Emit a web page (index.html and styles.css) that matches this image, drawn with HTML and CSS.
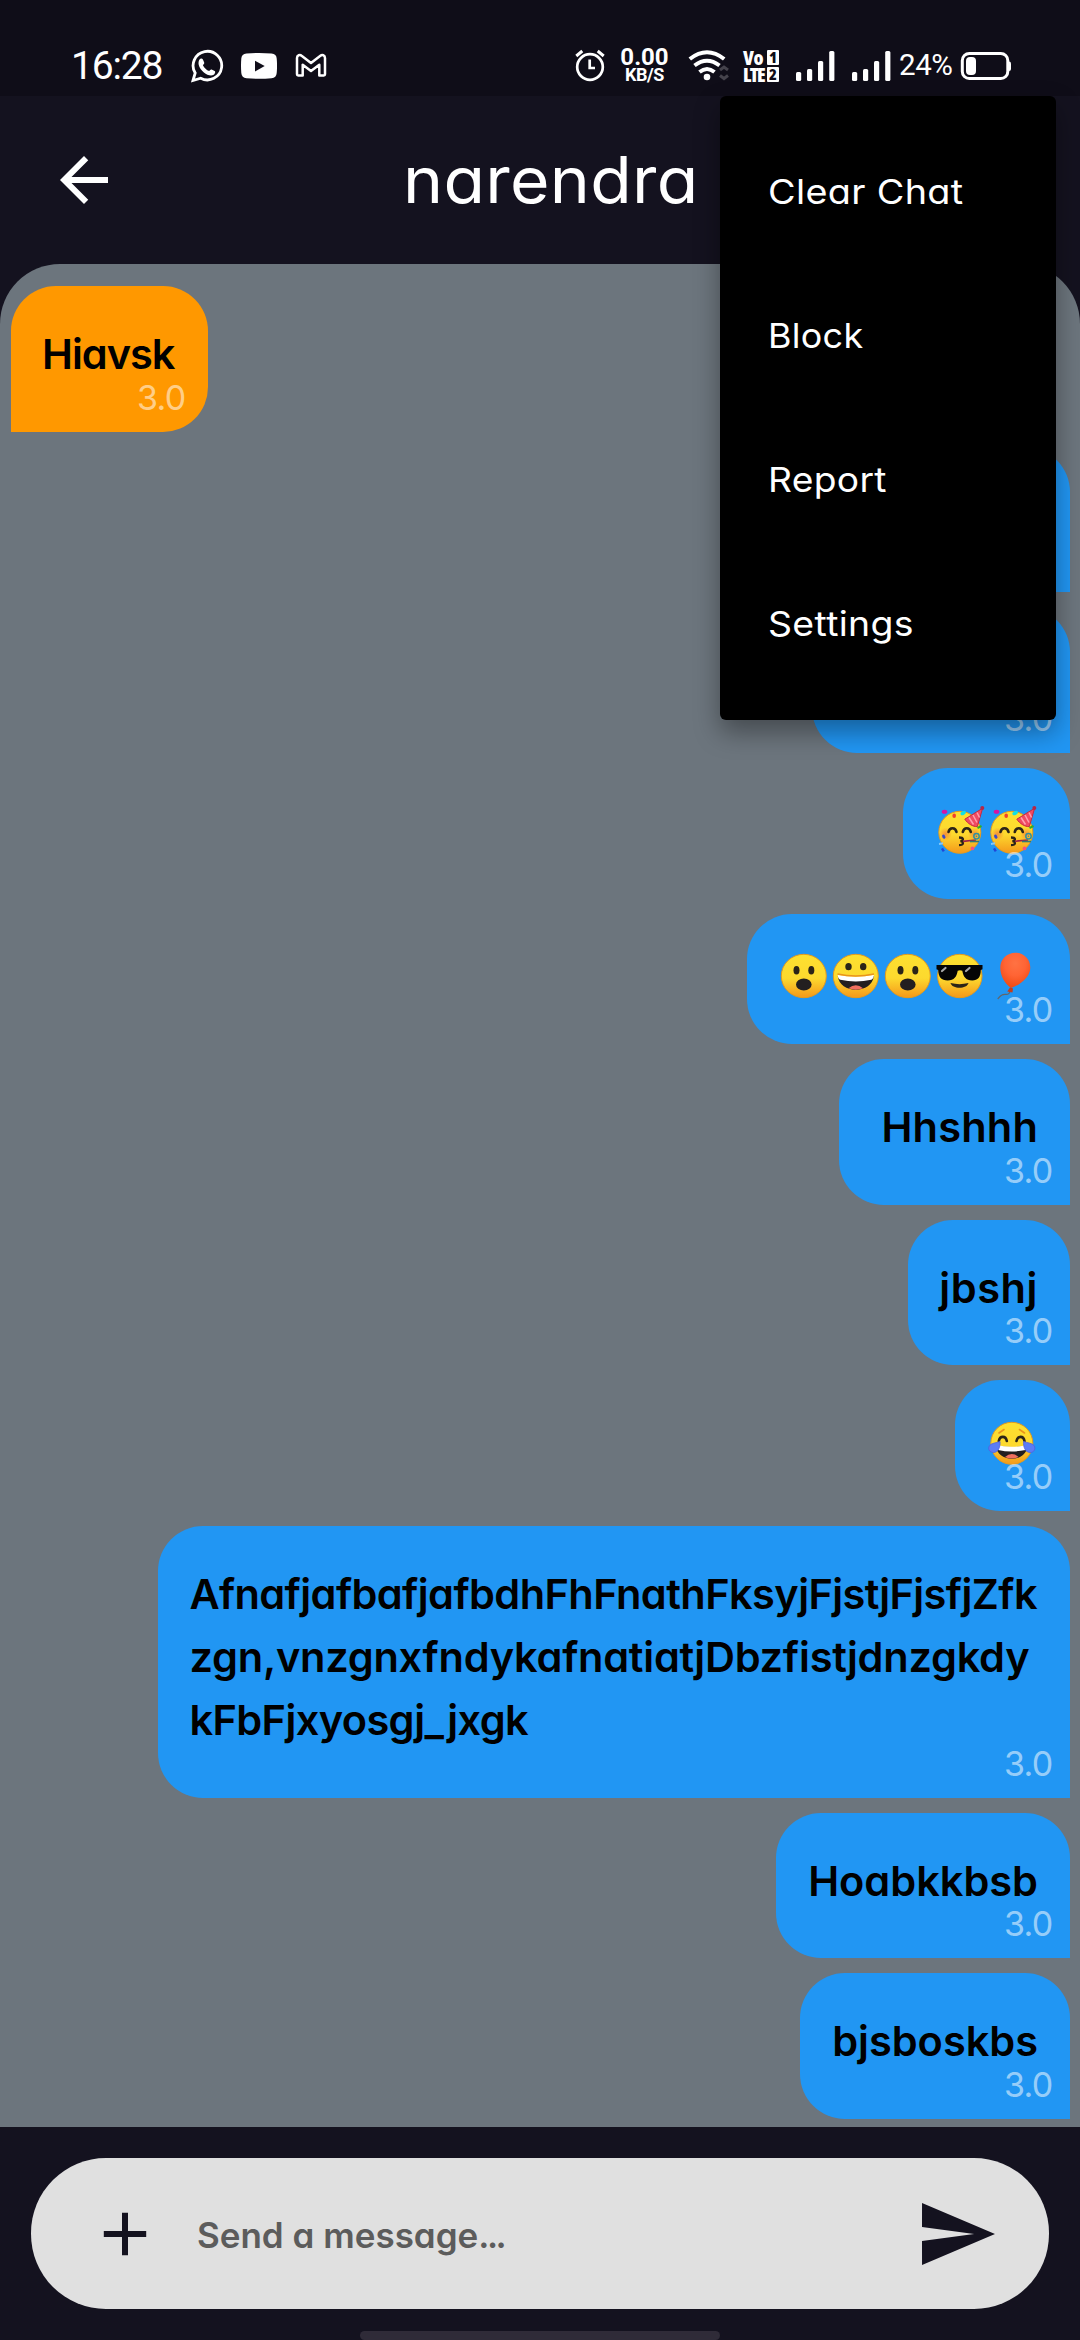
FILE: index.html
```html
<!DOCTYPE html>
<html lang="en">
<head>
<meta charset="utf-8">
<title>narendra</title>
<link rel="stylesheet" href="styles.css">
</head>
<body>
<svg class="sprite" aria-hidden="true">
  <defs>
    <linearGradient id="skin" x1="0" y1="0" x2="0" y2="1">
      <stop offset="0" stop-color="#fde030"/><stop offset=".55" stop-color="#fdd92e"/><stop offset=".95" stop-color="#f59f1c"/>
    </linearGradient>
    <radialGradient id="blush"><stop offset="0" stop-color="#f2763a" stop-opacity=".75"/><stop offset="1" stop-color="#f2763a" stop-opacity="0"/></radialGradient>
    <radialGradient id="rubber" cx=".5" cy=".3" r=".7"><stop offset="0" stop-color="#ff7243"/><stop offset=".5" stop-color="#ff6434"/><stop offset="1" stop-color="#f04a13"/></radialGradient>
  </defs>
  <symbol id="party" viewBox="0 0 52 52">
    <circle cx="25.800" cy="28.300" r="21" fill="url(#skin)" stroke="#e59a1c"/>
    <circle cx="11.500" cy="30" r="6.500" fill="url(#blush)"/><circle cx="40.500" cy="30" r="6.500" fill="url(#blush)"/>
    <path d="M14.500 28c1-5 7-5 8 0M28.800 28c1-5 7-5 8 0" fill="none" stroke="#2b2418" stroke-width="2.600" stroke-linecap="round"/>
    <path d="M25 33.500c5 0 5 3 1.500 3.600 3.500.6 3.500 4.100-1.500 4.100" fill="none" stroke="#2b2418" stroke-width="2.300"/>
    <path d="M29 37.300l13-1.300" stroke="#9b2148" stroke-width="1.700"/><path d="M36 37.500h9" stroke="#317a75" stroke-width="1.600"/>
    <circle cx="42.500" cy="32.300" r="2.700" fill="none" stroke="#3190a0" stroke-width="1.500"/><circle cx="42.500" cy="32.300" r=".8" fill="#3190a0"/>
    <path d="M48.600 4.300L30.800 15.200c3 4.500 8 7.500 12.500 7.500z" fill="#ef4b62" stroke="#c62840"/>
    <path d="M35 13.500l4.500 7M39 11l4 7.500M43 8.500l2.500 5" stroke="#ff9fae" stroke-width="1.500"/>
    <circle cx="48.300" cy="4" r="2" fill="#b52848"/>
    <ellipse cx="10.500" cy="7.700" rx="2.800" ry="2" fill="#d414a6"/>
    <ellipse cx="29.200" cy="9" rx="3" ry="1.900" fill="#12dfe5" transform="rotate(-30 29.200 9)"/>
    <ellipse cx="20.200" cy="11.700" rx="1.800" ry="2.200" fill="#f2402c"/>
    <path d="M43.500 24l4-2" stroke="#2fae27" stroke-width="2"/>
    <ellipse cx="9.800" cy="32.700" rx="1.500" ry="2.200" fill="#3a48c8" transform="rotate(-30 9.800 32.700)"/>
    <path d="M5 39.900l4-.6" stroke="#84c8f7" stroke-width="2"/>
    <path d="M8 44.300l1.800 3" stroke="#2146d8" stroke-width="2.400"/>
    <circle cx="38.500" cy="44.400" r="1.900" fill="#f4527c"/>
  </symbol>
  <symbol id="gasp" viewBox="0 0 52 52">
    <ellipse cx="25.800" cy="26" rx="22.500" ry="21.700" fill="url(#skin)" stroke="#e59a1c"/>
    <ellipse cx="18.500" cy="20.300" rx="3" ry="4.300" fill="#2b2418"/><ellipse cx="33.300" cy="20.300" rx="3" ry="4.300" fill="#2b2418"/>
    <ellipse cx="25.800" cy="34.500" rx="7.800" ry="6" fill="#231f20"/>
  </symbol>
  <symbol id="grin" viewBox="0 0 52 52">
    <ellipse cx="25.800" cy="26" rx="22.500" ry="21.700" fill="url(#skin)" stroke="#e59a1c"/>
    <ellipse cx="18.500" cy="16.700" rx="3.200" ry="3.600" fill="#2b2418"/><ellipse cx="33.200" cy="16.700" rx="3.200" ry="3.600" fill="#2b2418"/>
    <path d="M7.800 26q18 3.500 36 0c-1 9-9 13.700-18 13.700S8.800 35 7.800 26z" fill="#231f20"/>
    <path d="M7.800 25q18 3.500 36 0c0 3-1.300 4.300-2.500 4.800q-15.500 3.500-31 0C9 29.300 7.800 28 7.800 25z" fill="#fff"/>
    <path d="M18.500 38.300q7.300-6 14.600 0-7.300 2.700-14.600 0z" fill="#f1705f"/>
    <path d="M7.500 24q18 4 36.500 0" fill="none" stroke="#e9941c" stroke-width="1.400"/>
  </symbol>
  <symbol id="cool" viewBox="0 0 52 52">
    <ellipse cx="25.800" cy="26" rx="22.200" ry="21.700" fill="url(#skin)" stroke="#e59a1c"/>
    <path d="M2.500 15h46v4.300l-1.700.7c0 7-3 10.500-8.500 10.500-6.500 0-9-4-10-9.800q-2.300-1-4.600 0c-1 5.800-3.500 9.800-10 9.800C7.200 30.500 4.500 27 4.200 20l-1.700-.7z" fill="#050505"/>
    <path d="M8 21l3.500-3M32 21l3.500-3" stroke="#a9a9a9" stroke-width="2.200" stroke-linecap="round"/>
    <path d="M16.500 33q9 2.300 18 0c-1.500 6.300-16.500 6.300-18 0z" fill="#2b2418"/>
  </symbol>
  <symbol id="balloon" viewBox="0 0 52 52">
    <path d="M24 41c-1 6-5 2-8 4-2 1-3 2.500-4.200 4" fill="none" stroke="#62666b" stroke-width="1.300"/>
    <path d="M29.500 2.800c8.500 0 14.800 6.500 14.800 14.700 0 10-10.300 17.500-19.300 20.500-6-4.500-10.700-11.500-10.700-20.500 0-8.200 6.500-14.700 15.200-14.700z" fill="url(#rubber)"/>
    <path d="M24 37.500l3 1-.5 4-5.300-1z" fill="#c53d1b"/>
  </symbol>
  <symbol id="joy" viewBox="0 0 52 52">
    <circle cx="25.800" cy="26.300" r="21" fill="url(#skin)" stroke="#e59a1c"/>
    <path d="M13 16l5-3.500M38.500 16l-5-3.500" stroke="#e9941c" stroke-width="1.600" stroke-linecap="round"/>
    <path d="M12.800 24c1-5.500 7-5.500 8 0M30.500 24c1-5.500 7-5.500 8 0" fill="none" stroke="#2b2418" stroke-width="2.600" stroke-linecap="round"/>
    <path d="M10 28.500q15.800 3 31.600 0c-.6 8.500-7.500 13.200-15.800 13.200S10.600 37 10 28.500z" fill="#231f20"/>
    <path d="M10 28q15.800 3.500 31.600 0c0 3-.8 4.500-2 5q-13.800 3-27.600 0c-1.200-.5-2-2-2-5z" fill="#fff"/>
    <path d="M19 40q6.800-6 13.600 0-6.800 3-13.600 0z" fill="#f1705f"/>
    <path d="M14 24.500c.5 5-1.500 11-6.500 11-4 0-6-3.800-4-6.800 2-2.700 6.500-2.700 10.500-4.200zM37.600 24.500c-.5 5 1.500 11 6.500 11 4 0 6-3.800 4-6.800-2-2.700-6.500-2.700-10.500-4.200z" fill="#5b7cf5" stroke="#5060df" stroke-width=".8"/>
  </symbol>
  <symbol id="bars" viewBox="0 0 40 36">
    <g fill="#fff"><rect x="1" y="24" width="5.200" height="9" rx="1.500"/><rect x="12" y="21" width="5.200" height="12" rx="1.500"/><rect x="23" y="13" width="5.200" height="20" rx="1.500"/><rect x="34.200" y="3" width="5.200" height="30" rx="1.500"/></g>
  </symbol>
</svg>

<div class="phone">
  <div class="status">
    <span class="clock">16:28</span>
    <svg class="s-whatsapp" viewBox="190 49 34 34"><path d="M193 80.500l2.200-7.500a14.300 14.300 0 1 1 5.500 5.200z" fill="none" stroke="#fff" stroke-width="2.800"/><path d="M199.500 59.500c.8-1.300 2.700-1.500 3.400 0l1.300 3c.4 1-.7 2-1.300 2.700 1.500 2.900 3.500 4.700 6.300 5.900.8-.8 1.400-1.900 2.400-1.600l3 1.500c1.300.8.2 3.300-1.200 3.900-3 1.300-6.500-.2-9.500-2.500-2.500-2-4.500-4.700-5.200-7.700-.4-2 0-4 .8-5.200z" fill="#fff"/></svg>
    <svg class="s-youtube" viewBox="241 52 36 28"><path d="M246.500 53.600q12.500-1.300 25 0 5 .3 5.200 5 .7 7.200 0 14.500-.3 4.700-5.200 5.100-12.500 1.200-25 0-4.800-.4-5.200-5.100-.6-7.300 0-14.500.3-4.700 5.200-5z" fill="#fff"/><path d="M255 60.700v10.800l9.700-5.400z" fill="#100e19"/></svg>
    <svg class="s-gmail" viewBox="295 53 32 26"><path d="M297 58c0-3 3-3.500 4.600-2.200l9.400 7.200 9.400-7.200c1.700-1.300 4.600-.8 4.600 2.200v16.300c0 .9-.5 1.200-1.200 1.200h-4.500V64.800L311 71l-8.300-6.200v10.700h-4.500c-.7 0-1.200-.3-1.200-1.200z" fill="none" stroke="#fff" stroke-width="2.500" stroke-linejoin="round"/></svg>
    <div class="status-right">
      <svg class="s-alarm" viewBox="572 50 32 34"><g fill="none" stroke="#fff" stroke-width="2.700"><circle cx="588" cy="68" r="12.800"/><path d="M587.700 60.500v8.500h5.300" /><path d="M574.300 57l6-5M601.700 57l-6-5" stroke-width="3"/></g></svg>
      <div class="rate"><span class="rate-num">0.00</span><span class="rate-unit">KB/S</span></div>
      <svg class="s-wifi" viewBox="686 50 42 34"><g fill="none" stroke="#fff" stroke-width="4"><path d="M687.800 60q17.200-13.500 34.400 0"/><path d="M692.500 66.500q12.500-9.500 25 0"/><path d="M697.500 73q7.500-6 15 0"/></g><circle cx="705" cy="78" r="3.300" fill="#fff"/><path d="M718 71l4-3 4 3M718 76.500l4 3 4-3" fill="none" stroke="#45434c" stroke-width="3"/></svg>
      <div class="volte"><span class="v-text">Vo</span><span class="v-sim">1</span><span class="v-text v-lte">LTE</span><span class="v-sim">2</span></div>
      <svg class="s-bars"><use href="#bars"/></svg>
      <svg class="s-bars s-bars2"><use href="#bars"/></svg>
      <span class="percent">24%</span>
      <svg class="s-battery" viewBox="960 51 52 30"><rect x="962.300" y="53.500" width="45.500" height="25" rx="7" fill="none" stroke="#fff" stroke-width="3"/><rect x="966" y="57" width="10" height="18" rx="4" fill="#fff"/><path d="M1009 61.500q2 0 2 2v5.500q0 2-2 2z" fill="#fff"/></svg>
    </div>
  </div>

  <header class="topbar">
    <svg class="back" viewBox="0 0 24 24"><path d="M20 11H7.830l5.590-5.590L12 4l-8 8 8 8 1.410-1.410L7.830 13H20v-2z" fill="#fff"/></svg>
    <h1 class="title">narendra</h1>
  </header>

  <main class="chat">
    <div class="bubble in w1"><span class="msg t1">Hiavsk</span><span class="stamp">3.0</span></div>
    <div class="bubble w3"><span class="stamp">3.0</span></div>
    <div class="bubble w3"><span class="stamp">3.0</span></div>
    <div class="bubble emoji"><svg><use href="#party"/></svg><svg><use href="#party"/></svg><span class="stamp">3.0</span></div>
    <div class="bubble emoji"><svg><use href="#gasp"/></svg><svg><use href="#grin"/></svg><svg><use href="#gasp"/></svg><svg><use href="#cool"/></svg><svg><use href="#balloon"/></svg><span class="stamp">3.0</span></div>
    <div class="bubble w6"><span class="msg t6">Hhshhh</span><span class="stamp">3.0</span></div>
    <div class="bubble w7"><span class="msg t7">jbshj</span><span class="stamp">3.0</span></div>
    <div class="bubble emoji"><svg><use href="#joy"/></svg><span class="stamp">3.0</span></div>
    <div class="bubble long"><span class="msg"><span class="l1">AfnafjafbafjafbdhFhFnathFksyjFjstjFjsfjZfk</span><br><span class="l2">zgn,vnzgnxfndykafnatiatjDbzfistjdnzgkdy</span><br><span class="l3">kFbFjxyosgj_jxgk</span></span><span class="stamp">3.0</span></div>
    <div class="bubble w10"><span class="msg">Hoabkkbsb</span><span class="stamp">3.0</span></div>
    <div class="bubble w11"><span class="msg">bjsboskbs</span><span class="stamp">3.0</span></div>
  </main>

  <footer class="composer">
    <div class="field">
      <svg class="plus" viewBox="0 0 44 44"><path d="M22 .8v42.400M.8 22h42.400" stroke="#14121f" stroke-width="6"/></svg>
      <span class="placeholder">Send a message<span class="dots">...</span></span>
      <svg class="send" viewBox="2 3 21 18" preserveAspectRatio="none"><path d="M2.010 21L23 12 2.010 3 2 10l15 2-15 2z" fill="#14121f"/></svg>
    </div>
    <div class="home-bar"></div>
  </footer>

  <nav class="menu">
    <div class="item m1">Clear Chat</div>
    <div class="item m2">Block</div>
    <div class="item m3">Report</div>
    <div class="item m4">Settings</div>
  </nav>
</div>
</body>
</html>
```
FILE: styles.css
```css
* { box-sizing: border-box; }
body { margin: 0; background: #14121f; }
.sprite { position: absolute; width: 0; height: 0; }
.phone {
  position: relative;
  width: 1080px;
  height: 2340px;
  overflow: hidden;
  display: flex;
  flex-direction: column;
  background: #14121f;
  color: #fff;
  font-family: Inter, "Open Sans", sans-serif;
  font-feature-settings: "cv11" 1, "calt" 0;
  white-space: nowrap;
}

/* status bar */
.status { height: 96px; flex: none; display: flex; align-items: center; background: #0f0d18; padding: 36px 68px 0 71px; }
.status svg { display: block; flex: none; }
.clock { width: 119px; font: 39px/1 Roboto, sans-serif; letter-spacing: -1.200px; }
.s-whatsapp { width: 34px; height: 34px; }
.s-youtube { width: 36px; height: 28px; margin-left: 17px; }
.s-gmail { width: 32px; height: 26px; margin-left: 18px; }
.status-right { margin-left: auto; display: flex; align-items: center; }
.s-alarm { width: 32px; height: 34px; margin-right: 13px; }
.rate { width: 51px; display: flex; flex-direction: column; align-items: center; font-family: Roboto, sans-serif; font-weight: 700; margin-right: 18px; }
.rate-num { font-size: 24px; line-height: 18px; letter-spacing: 0; }
.rate-unit { font-size: 18px; line-height: 18px; letter-spacing: -.4px; }
.s-wifi { width: 42px; height: 34px; margin-right: 13px; }
.volte { width: 36px; display: grid; grid-template-columns: 23px 12px; column-gap: 1px; row-gap: 2px; font: 800 19.500px/15px "Open Sans", sans-serif; font-stretch: 75%; }
.v-text { letter-spacing: -.3px; }
.v-lte { letter-spacing: -1.600px; }
.v-sim { background: #fff; color: #0f0d18; font-size: 16px; text-align: center; border-radius: 1px; }
.s-bars { width: 40px; height: 36px; margin-left: 16px; }
.s-bars2 { margin-left: 16px; }
.percent { font: 29.500px/1 Roboto, sans-serif; width: 61px; margin: 0 0 0 8px; letter-spacing: -.4px; }
.s-battery { width: 52px; height: 30px; }

/* app bar */
.topbar { height: 168px; flex: none; display: flex; align-items: center; padding-left: 48px; }
.back { width: 72px; height: 72px; }
.title { margin: 0 0 0 283px; font-size: 64px; line-height: 80px; font-weight: 400; letter-spacing: .3px; transform: scaleX(1.06); transform-origin: left; }

/* conversation */
.chat {
  height: 1863px;
  flex: none;
  display: flex;
  flex-direction: column;
  align-items: flex-end;
  gap: 15px;
  padding: 22.300px 10.500px 0;
  background: #6c757d;
  border-radius: 60px 60px 0 0;
}
.bubble {
  position: relative;
  flex: none;
  height: 145.600px;
  padding: 36.400px 31.500px 0;
  display: flex;
  justify-content: flex-end;
  align-items: flex-start;
  background: #2196f3;
  border-radius: 45px 45px 0 45px;
}
.bubble.in { align-self: flex-start; background: #ff9800; border-radius: 45px 45px 45px 0; justify-content: flex-start; }
.msg { color: #000; font-size: 41.500px; line-height: 63px; font-weight: 600; padding-top: .6px; }
.stamp { position: absolute; right: 17px; bottom: 12px; font-size: 34px; line-height: 44px; color: rgba(255, 255, 255, .54); letter-spacing: -.7px; }
.in .stamp { right: 22.500px; }
.t1 { letter-spacing: -1px; }
.t6 { letter-spacing: .2px; }
.t7 { letter-spacing: .6px; }
.l1 { letter-spacing: -.57px; }
.l2 { letter-spacing: -.23px; }
.l3 { letter-spacing: -.6px; }
.w1 { width: 197.500px; }
.w3 { width: 258px; }
.w6 { width: 230.500px; }
.w7 { width: 161.500px; }
.w10 { width: 293.500px; }
.w11 { width: 269.500px; }
.emoji { height: 130.600px; }
.emoji svg { width: 52px; height: 52px; display: block; }
.long { width: 911.500px; height: 271.700px; justify-content: flex-start; }

/* composer */
.composer { flex: 1; display: flex; flex-direction: column; align-items: center; padding-top: 31px; }
.field { width: 1018px; height: 151px; border-radius: 75px; background: #e0e0e0; display: flex; align-items: center; padding: 0 54px 0 72px; }
.plus { width: 44px; height: 44px; }
.placeholder { margin: 3px 0 0 50px; color: #5c5c5c; font-size: 35px; font-weight: 600; line-height: 50px; }
.dots { letter-spacing: -2.500px; }
.send { width: 73px; height: 62px; margin-left: auto; }
.home-bar { width: 360px; height: 9px; margin-top: auto; border-radius: 5px; background: #2f2b38; }

/* overflow menu */
.menu { position: absolute; left: 720px; top: 96px; width: 336px; height: 624px; padding: 24px 48px; background: #000; border-radius: 6px; box-shadow: 0 12px 26px rgba(0, 0, 0, .36); }
.item { height: 144px; line-height: 143px; font-size: 34.500px; width: max-content; letter-spacing: .3px; transform-origin: left; }
.m1 { transform: scaleX(1.095); }
.m2 { transform: scaleX(1.04); }
.m3 { transform: scaleX(1.078); }
.m4 { transform: scaleX(1.085); }
```
